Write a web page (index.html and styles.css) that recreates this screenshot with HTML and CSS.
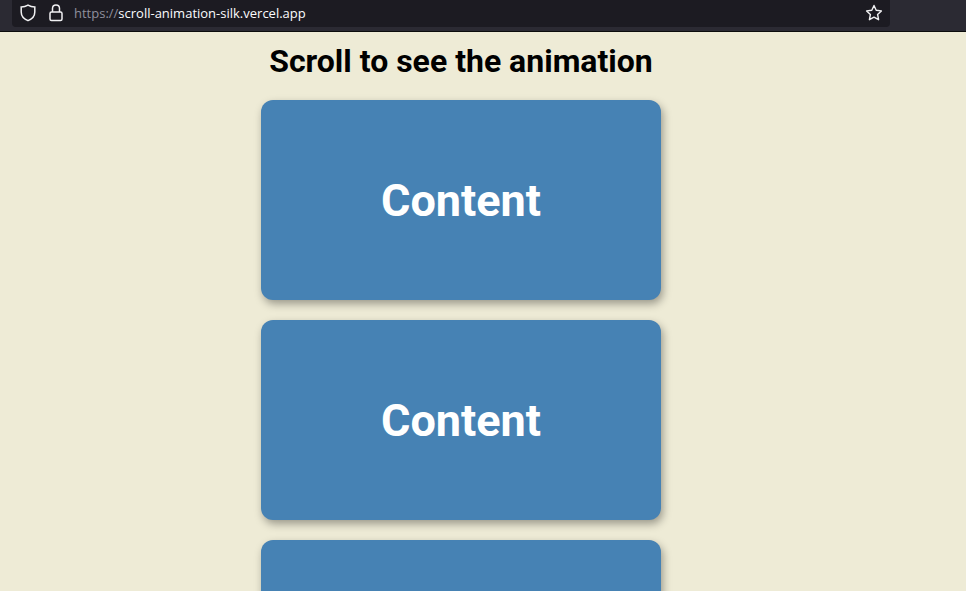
FILE: index.html
```html
<!DOCTYPE html>
<html lang="en">
<head>
    <meta charset="UTF-8">
    <title>Scroll animation</title>
    <link rel="stylesheet" href="styles.css">
</head>
<body>
    <!-- browser toolbar -->
    <div class="toolbar">
        <div class="url-bar">
            <svg class="icon icon-shield" width="16" height="18" viewBox="0 0 16 18" fill="none" stroke="#f1f1f3" stroke-width="1.5">
                <path d="M8 1.2 C10 2.4 12.4 3 14.8 3 V8 C14.8 12.2 12 15 8 16.6 C4 15 1.2 12.2 1.2 8 V3 C3.6 3 6 2.4 8 1.2 Z"/>
            </svg>
            <svg class="icon icon-lock" width="14" height="18" viewBox="0 0 14 18" fill="none" stroke="#f1f1f3" stroke-width="1.5">
                <path d="M3.5 8 V4.5 C3.5 2.4 5 1 7 1 C9 1 10.5 2.4 10.5 4.5 V8"/>
                <rect x="1" y="8" width="12" height="8.5" rx="1.5"/>
            </svg>
            <span class="url"><span class="url-scheme">https://</span>scroll-animation-silk.vercel.app</span>
            <svg class="icon icon-star" width="18" height="18" viewBox="0 0 18 18" fill="none" stroke="#f1f1f3" stroke-width="1.4" stroke-linejoin="round">
                <path d="M9 1.5 L11.2 6.3 L16.4 6.9 L12.6 10.5 L13.6 15.7 L9 13.1 L4.4 15.7 L5.4 10.5 L1.6 6.9 L6.8 6.3 Z"/>
            </svg>
        </div>
    </div>

    <!-- page -->
    <main class="page">
        <h1 class="title">Scroll to see the animation</h1>
        <div class="card">Content</div>
        <div class="card">Content</div>
        <div class="card"></div>
    </main>
</body>
</html>
```

FILE: styles.css
```css
html,
body {
    margin: 0;
    height: 100%;
    overflow: hidden;
}

body {
    background-color: #eeebd6;
    font-family: Roboto, "Liberation Sans", sans-serif;
}

/* browser toolbar */
.toolbar {
    height: 31px;
    padding-left: 12px;
    background-color: #2b2a33;
    border-bottom: 1px solid #0c0c0d;
}

.url-bar {
    display: flex;
    align-items: center;
    width: 878px;
    height: 27px;
    padding-bottom: 2px;
    box-sizing: border-box;
    background-color: #1c1b22;
    border-radius: 0 0 4px 4px;
    color: #fbfbfe;
}

.icon {
    flex: none;
}

.icon-shield {
    margin-left: 8px;
}

.icon-lock {
    margin-left: 13px;
}

.url {
    margin-left: 11px;
    font-family: "Open Sans", "Noto Sans", sans-serif;
    font-size: 13px;
}

.url-scheme {
    color: #8f8f9d;
}

.icon-star {
    margin-left: auto;
    margin-right: 7px;
}

/* page */
.page {
    display: flex;
    flex-direction: column;
    align-items: center;
    gap: 20px;
    width: 922px;
}

.title {
    margin: 12px 0 2px;
    font-size: 32px;
    line-height: 34px;
    font-weight: 700;
    color: #000;
}

.card {
    display: flex;
    flex: none;
    align-items: center;
    justify-content: center;
    width: 400px;
    height: 200px;
    border-radius: 12px;
    background-color: #4682b4;
    box-shadow: 2px 4px 8px rgba(0, 0, 0, 0.35);
    color: #fff;
    font-size: 45px;
    font-weight: 700;
}
```
